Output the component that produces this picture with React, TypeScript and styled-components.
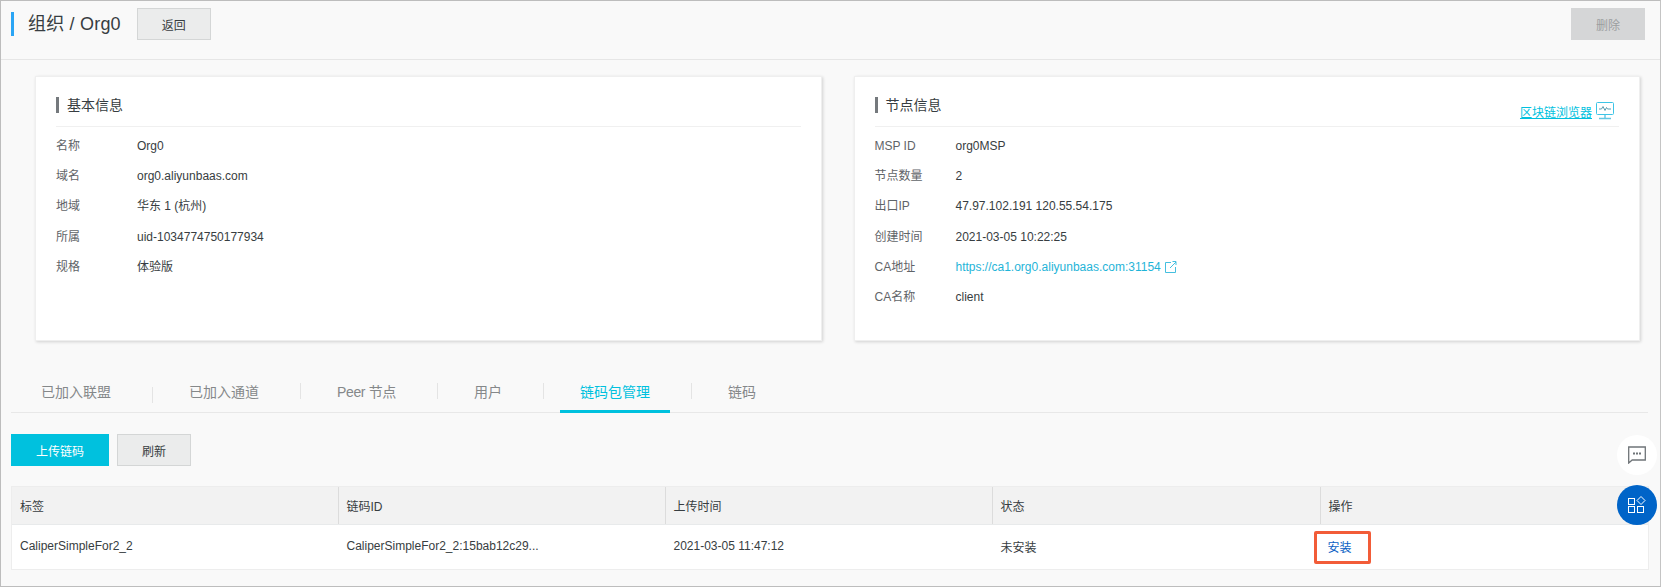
import React from "react";
import styled, { createGlobalStyle } from "styled-components";

const Global = createGlobalStyle`
  html, body { margin: 0; padding: 0; background: #fff; }
  body { font-family: "Liberation Sans", "Noto Sans CJK SC", sans-serif; font-size: 12px; color: #373d41; }
`;

const Page = styled.div`
  position: relative; box-sizing: border-box; width: 1661px; height: 587px;
  background: #f9f9f9; border: 1px solid #bdbdbd; border-right-color: #c4c4c4; overflow: hidden;
`;
const Header = styled.header`
  display: flex; align-items: center; justify-content: space-between;
  box-sizing: border-box; height: 59px; padding: 7px 15px 19px 10px; border-bottom: 1px solid #e6e6e6;
`;
const HeaderLeft = styled.div`display: flex; align-items: center;`;
const Title = styled.h1`
  margin: 0 16px 0 0; padding-left: 14px; border-left: 3px solid #2aa5f5; height: 24px; line-height: 24px;
  font-size: 18px; font-weight: 400; color: #373d41; letter-spacing: 0.2px;
`;
const Button = styled.button<{ $w?: number; $kind?: "primary" | "disabled" }>`
  box-sizing: border-box; width: ${(p) => p.$w ?? 74}px; height: 32px; padding: 0; font: inherit; font-size: 12px;
  border: 1px solid ${(p) => (p.$kind === "primary" ? "#00c1de" : p.$kind === "disabled" ? "#d5d6d7" : "#d4d6d6")};
  background: ${(p) => (p.$kind === "primary" ? "#00c1de" : p.$kind === "disabled" ? "#d5d6d7" : "#ebecec")};
  color: ${(p) => (p.$kind === "primary" ? "#fff" : p.$kind === "disabled" ? "#9b9ea0" : "#373d41")};
`;
const Cards = styled.section`display: flex; gap: 32px; padding: 16px 20px 0 34px;`;
const Card = styled.div`
  flex: 1 1 0; box-sizing: border-box; height: 265px; padding: 20px 20px 0 20px; background: #fff;
  border: 1px solid #efefef; box-shadow: 1px 1px 3px rgba(0,0,0,.16);
`;
const CardHead = styled.div`
  display: flex; align-items: flex-start; justify-content: space-between; height: 29px; border-bottom: 1px solid #f0f0f0;
`;
const CardTitle = styled.h2`
  margin: 0; padding-left: 8px; border-left: 3px solid #75797d; height: 16px; line-height: 16px;
  font-size: 14px; font-weight: 400; color: #373d41;
`;
const Explorer = styled.div`display: flex; align-items: flex-start; gap: 4px; margin: 5px 5px 0 0; color: #00c1de;`;
const ExplorerLink = styled.a`font-size: 12px; line-height: 16px; margin-top: 3px; color: #00c1de; text-decoration: underline;`;
const InfoList = styled.dl`margin: 4px 0 0; `;
const Row = styled.div`display: flex; align-items: center; height: 30.2px; line-height: 30px;`;
const Label = styled.dt`width: 81px; color: #5f6468;`;
const Value = styled.dd`margin: 0; display: flex; align-items: center; color: #373d41;`;
const ValueLink = styled.a`display: inline-flex; align-items: center; gap: 4px; color: #1fb4d8; text-decoration: none;`;
const Tabs = styled.nav`
  display: flex; align-items: flex-end; height: 44px; margin: 27px 12px 0 10px; padding-left: 10px; border-bottom: 1px solid #e8e8e8;
`;
const Tab = styled.div<{ $active?: boolean; $tight?: boolean }>`
  box-sizing: border-box; height: 44px; padding: 2px 20px 3px; line-height: 42px; font-size: 14px; margin-bottom: -1px;
  color: ${(p) => (p.$active ? "#00c1de" : "#85888a")};
  border-bottom: 3px solid ${(p) => (p.$active ? "#00c1de" : "transparent")};
  white-space: nowrap;
  ${(p) => (p.$tight ? "letter-spacing: -0.35px;" : "")}
`;
const TabSep = styled.i<{ $raised?: boolean }>`
  display: block; width: 1px; height: 16px; margin: 0 16px ${(p) => (p.$raised ? 13 : 9)}px 21px; background: #e4e4e4;
`;
const Actions = styled.div`display: flex; gap: 8px; padding: 21px 0 0 10px;`;
const Table = styled.div`
  box-sizing: border-box; width: 1638px; margin: 20px 0 0 10px; border: 1px solid #ededed;
`;
const TableRow = styled.div<{ $head?: boolean }>`
  display: grid; grid-template-columns: 327px 327px 327px 328px 1fr;
  height: ${(p) => (p.$head ? 37 : 44)}px;
  background: ${(p) => (p.$head ? "#f2f2f2" : "#fff")};
  ${(p) => (p.$head ? "border-bottom: 1px solid #e8eaeb;" : "")}
`;
const Cell = styled.div<{ $head?: boolean }>`
  display: flex; align-items: center; padding-left: 8px; min-width: 0; white-space: nowrap; color: #373d41;
  &:not(:first-child) { padding-left: 7.5px; }
  ${(p) => (p.$head ? "border-right: 1px solid #dcdcdc; &:last-child { border-right: 0; }" : "padding-bottom: 2px;")}
`;
const HighlightBox = styled.span`
  display: flex; align-items: center; box-sizing: border-box;
  width: 57px; height: 33px; margin: 2px 0 0 -15px; padding: 0 0 2px 11px; border: 3px solid #f25c38; border-radius: 2px;
`;
const InstallLink = styled.a`color: #0b5fc4;`;
const Floating = styled.button<{ $blue?: boolean }>`
  position: absolute; left: 1616px; top: ${(p) => (p.$blue ? 484 : 434)}px; width: 40px; height: 40px; padding: 0; border: 0; border-radius: 50%;
  display: flex; align-items: center; justify-content: center;
  background: ${(p) => (p.$blue ? "#0064c8" : "#fff")};
`;

const MonitorIcon = () => (
  <svg width="18" height="18" viewBox="0 0 18 18" fill="none" stroke="#63c7e3" strokeWidth="1">
    <rect x="0.5" y="0.5" width="17" height="12" rx="1" stroke="#3cc4e6" />
    <path d="M3 7h2.5l1.5-2.5 2 4 1.5-3 1 1.5H15" stroke="#5a9db0" />
    <path d="M9 13v3M3 16.5h12" strokeWidth="1.4" />
  </svg>
);
const ExternalIcon = () => (
  <svg width="12" height="12" viewBox="0 0 12 12" fill="none" stroke="#45bfdf" strokeWidth="1">
    <path d="M6 1.5H.5v10h10V6" />
    <path d="M5 7l6-6M7.5.5h3.5V4" />
  </svg>
);
const ChatIcon = () => (
  <svg width="18" height="18" viewBox="0 0 18 18" fill="none">
    <path d="M.7 1h16.6v13H4.2L.7 17z" stroke="#6f7478" strokeWidth="1.3" />
    <path d="M5 6.5h2v2H5zM8 6.5h2v2H8zM11 6.5h2v2h-2z" fill="#6f7478" />
  </svg>
);
const AppsIcon = () => (
  <svg width="18" height="18" viewBox="0 0 18 18" fill="none" stroke="#fff" strokeWidth="1">
    <rect x=".5" y="2.5" width="6" height="6" />
    <rect x=".5" y="10.5" width="6" height="6" />
    <rect x="9.5" y="10.5" width="6" height="6" />
    <path d="M13 .5l4 4-4 4-4-4z" />
  </svg>
);

const basic = [
  ["名称", "Org0"],
  ["域名", "org0.aliyunbaas.com"],
  ["地域", "华东 1 (杭州)"],
  ["所属", "uid-1034774750177934"],
  ["规格", "体验版"],
];
const nodes = [
  ["MSP ID", "org0MSP"],
  ["节点数量", "2"],
  ["出口IP", "47.97.102.191 120.55.54.175"],
  ["创建时间", "2021-03-05 10:22:25"],
];

export default function App() {
  return (
    <Page>
      <Global />
      <Header>
        <HeaderLeft>
          <Title>组织 / Org0</Title>
          <Button>返回</Button>
        </HeaderLeft>
        <Button $kind="disabled">删除</Button>
      </Header>
      <Cards>
        <Card>
          <CardHead><CardTitle>基本信息</CardTitle></CardHead>
          <InfoList>
            {basic.map(([k, v]) => (
              <Row key={k}><Label>{k}</Label><Value>{v}</Value></Row>
            ))}
          </InfoList>
        </Card>
        <Card>
          <CardHead>
            <CardTitle>节点信息</CardTitle>
            <Explorer><ExplorerLink>区块链浏览器</ExplorerLink><MonitorIcon /></Explorer>
          </CardHead>
          <InfoList>
            {nodes.map(([k, v]) => (
              <Row key={k}><Label>{k}</Label><Value>{v}</Value></Row>
            ))}
            <Row><Label>CA地址</Label><Value><ValueLink>https://ca1.org0.aliyunbaas.com:31154 <ExternalIcon /></ValueLink></Value></Row>
            <Row><Label>CA名称</Label><Value>client</Value></Row>
          </InfoList>
        </Card>
      </Cards>
      <Tabs>
        <Tab>已加入联盟</Tab><TabSep />
        <Tab>已加入通道</Tab><TabSep $raised />
        <Tab $tight>Peer 节点</Tab><TabSep $raised />
        <Tab>用户</Tab><TabSep $raised />
        <Tab $active>链码包管理</Tab><TabSep $raised />
        <Tab>链码</Tab>
      </Tabs>
      <Actions>
        <Button $w={98} $kind="primary">上传链码</Button>
        <Button>刷新</Button>
      </Actions>
      <Table>
        <TableRow $head>
          {["标签", "链码ID", "上传时间", "状态", "操作"].map((h) => <Cell $head key={h}>{h}</Cell>)}
        </TableRow>
        <TableRow>
          <Cell>CaliperSimpleFor2_2</Cell>
          <Cell>CaliperSimpleFor2_2:15bab12c29...</Cell>
          <Cell>2021-03-05 11:47:12</Cell>
          <Cell>未安装</Cell>
          <Cell><HighlightBox><InstallLink>安装</InstallLink></HighlightBox></Cell>
        </TableRow>
      </Table>
      <Floating aria-label="chat"><ChatIcon /></Floating>
      <Floating $blue aria-label="apps"><AppsIcon /></Floating>
    </Page>
  );
}
